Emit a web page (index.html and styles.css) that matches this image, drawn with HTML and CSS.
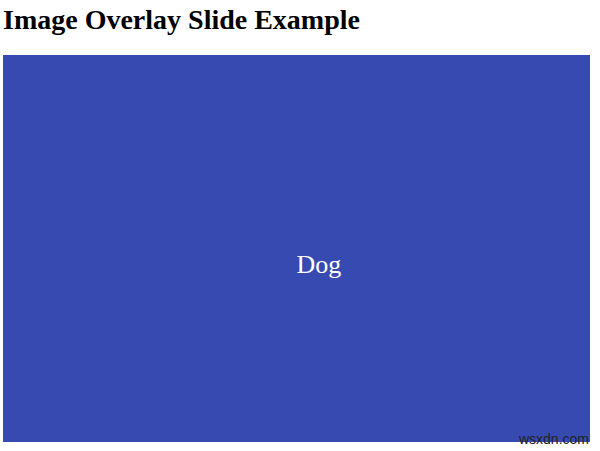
FILE: index.html
```html
<!DOCTYPE html>
<html lang="en">
<head>
<meta charset="UTF-8">
<meta name="viewport" content="width=device-width, initial-scale=1.0">
<title>Image Overlay Slide</title>
<link rel="stylesheet" href="styles.css">
</head>
<body>

<h2>Image Overlay Slide Example</h2>

<div class="container">
    <div class="overlay">
        <div class="text">Dog</div>
    </div>
</div>

<div class="mark">wsxdn.com</div>

</body>
</html>
```

FILE: styles.css
```css
body {
    margin: 3px;
    font-family: "Liberation Serif", "Times New Roman", serif;
    position: relative;
    height: 445px;
}
h2 {
    font-size: 28px;
    margin: 3px 0 21px 0;
    line-height: 28px;
}
.container {
    position: relative;
    width: 587px;
    height: 387px;
    background: #374ab2;
}
.overlay {
    width: 100%;
    height: 100%;
}
.text {
    position: absolute;
    top: 50%;
    left: 50%;
    color: white;
    font-size: 26px;
    line-height: 32px;
}
.mark {
    position: absolute;
    right: 8px;
    bottom: 1px;
    font-family: "Liberation Sans", Arial, sans-serif;
    font-size: 14px;
    color: #222;
}
```
